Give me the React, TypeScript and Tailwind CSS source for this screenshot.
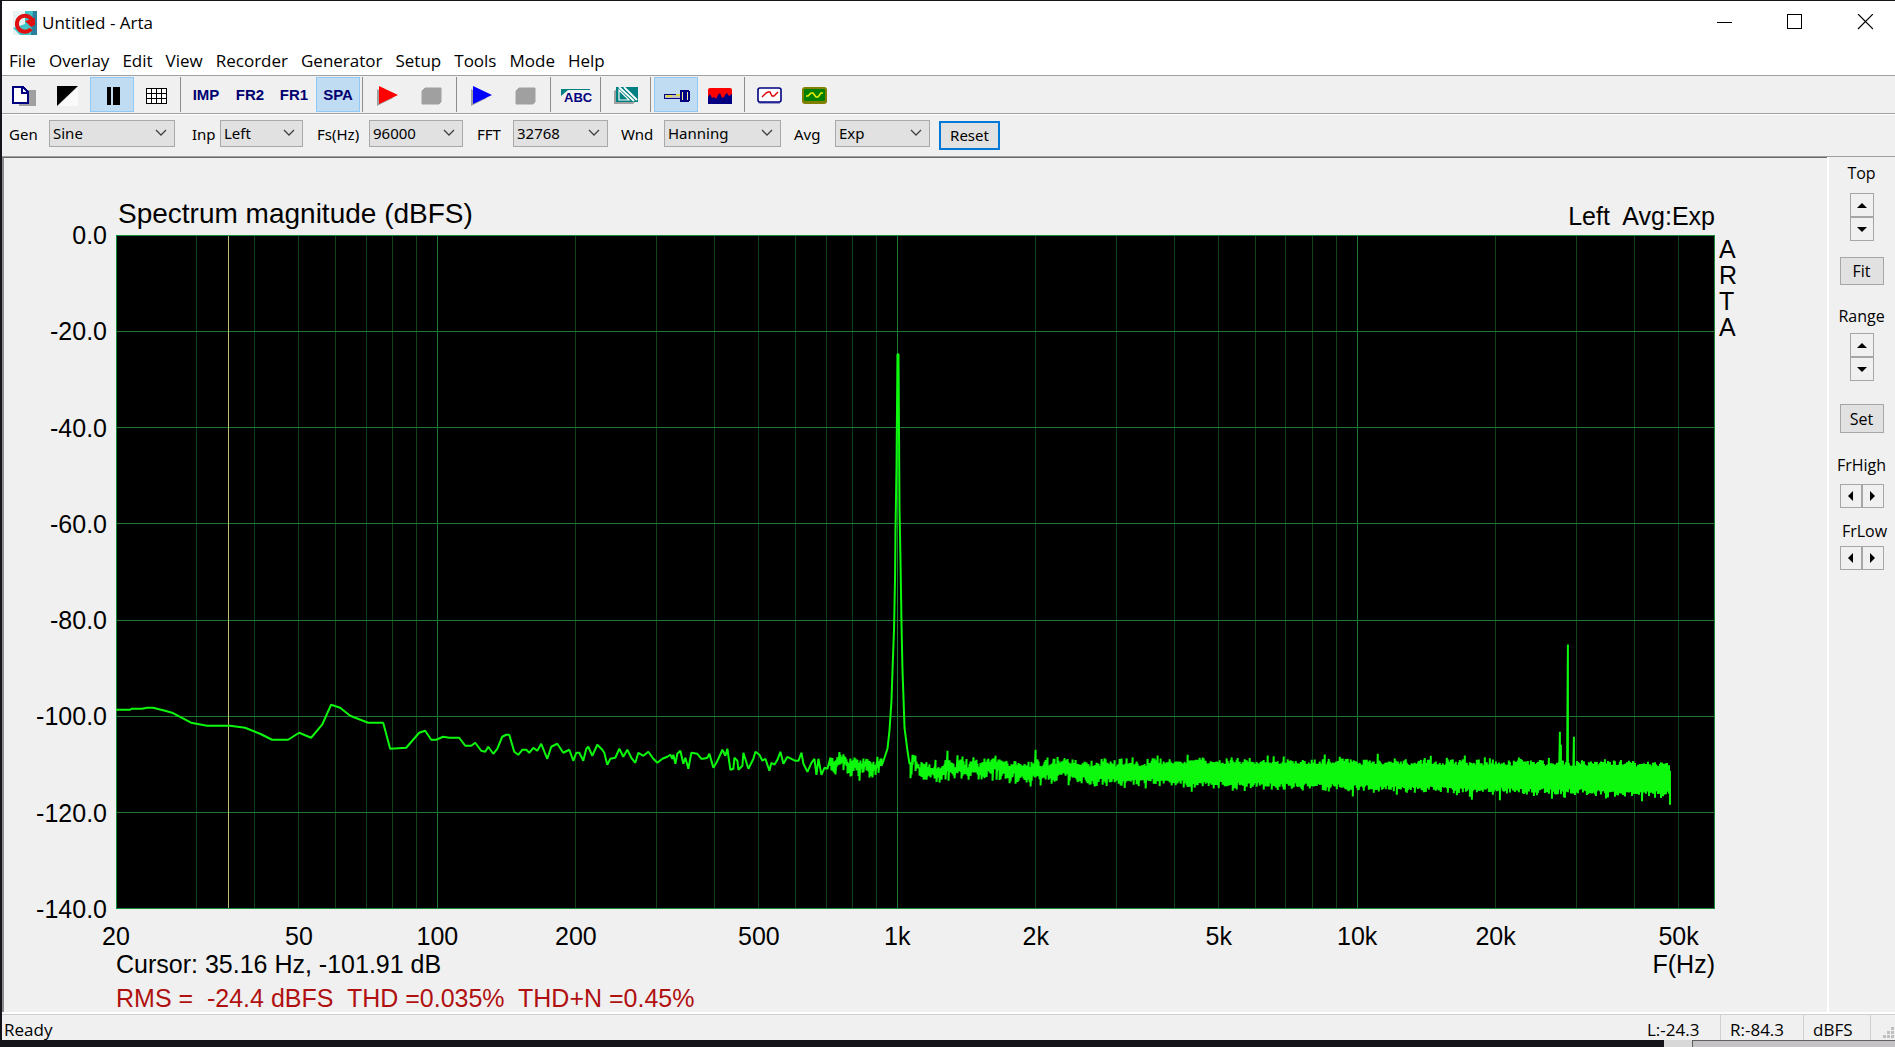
// App.tsx
import type { ReactNode } from "react";

const menuItems = ["File", "Overlay", "Edit", "View", "Recorder", "Generator", "Setup", "Tools", "Mode", "Help"];

/* ---------- Toolbar icons ---------- */

const NewIcon = () => (
  <svg width="24" height="20" shapeRendering="crispEdges">
    <path d="M7 4h17v16H7z" fill="#a0a0a0" />
    <path d="M1 1h10l5 5v11H1z" fill="#fff" stroke="#000080" strokeWidth="2" />
    <path d="M10 1v6h6" fill="none" stroke="#000080" strokeWidth="2" />
  </svg>
);

const InvertIcon = () => (
  <svg width="22" height="20">
    <path d="M21 1v19H2z" fill="#fafafa" />
    <path d="M0 0h21L0 20z" fill="#000" />
  </svg>
);

const PauseIcon = () => (
  <svg width="14" height="18" className="ml-1" shapeRendering="crispEdges">
    <path d="M0 0h4v18H0zM6 0h7v18H6z" fill="#000" />
  </svg>
);

const GridIcon = () => (
  <svg width="22" height="17" shapeRendering="crispEdges">
    <path d="M1 1h20v15H1z" fill="#fff" stroke="#000" strokeWidth="1" />
    <path d="M6 1v15M11 1v15M16 1v15M1 6h20M1 11h20" stroke="#000" strokeWidth="1" />
  </svg>
);

const PlayIcon = ({ color }: { color: string }) => (
  <svg width="24" height="20">
    <path d="M1 3v17l16-8z" fill="#a0a0a0" />
    <path d="M3 0v18l19-9z" fill={color} />
  </svg>
);

const StopIcon = () => (
  <svg width="22" height="18">
    <path d="M4 1h16v14l-2 2H1V4z" fill="#a0a0a0" stroke="#a0a0a0" strokeLinejoin="round" />
  </svg>
);

const AbcIcon = () => (
  <svg width="31" height="18">
    <path d="M0 2h29v1H7L0 9z" fill="#008080" />
    <text x="3" y="15" fontSize="13" fontWeight="bold" fill="#000080" fontFamily="Liberation Sans, sans-serif">ABC</text>
  </svg>
);

const StepIcon = () => (
  <svg width="25" height="18">
    <path d="M0 4l3-2v12h19l-3 3H0z" fill="#a0a0a0" />
    <path d="M2 0h22v15H2z" fill="#008080" />
    <path d="M5 3v10h10z" fill="#008080" stroke="#fff" strokeWidth="1.2" />
    <path d="M5 0l15 14M10 0l13 13" stroke="#fff" strokeWidth="1.8" />
  </svg>
);

const PlugIcon = () => (
  <svg width="27" height="12" shapeRendering="crispEdges">
    <path d="M1 4h16v4H1z" fill="#c0c0c0" stroke="#000080" />
    <path d="M3 6h6M13 5h4" stroke="#e0d840" strokeWidth="2" />
    <path d="M18 1h3v10h-3zM23 1h2l1 1v8l-1 1h-2z" fill="#f0f0a0" stroke="#000080" strokeWidth="1.5" />
    <path d="M21 0v12h2V0z" fill="#000080" />
  </svg>
);

const SpectrumIcon = () => (
  <svg width="24" height="16">
    <rect width="24" height="16" rx="2" fill="#ff0000" />
    <path d="M0 9l2-3 2 4 2-1 2 2 2-4 2-2 2 5 2-1 1-2 2-2 2 3 3-2v10H0z" fill="#000080" />
  </svg>
);

const ScopeIcon = () => (
  <svg width="26" height="18">
    <path d="M1 5v11l2 1h20v-3z" fill="#9a9acb" />
    <rect x="1" y="1" width="23" height="14" rx="2" fill="#fff" stroke="#000080" strokeWidth="1.6" />
    <path d="M5 10l4-4 2-1 2 0 2 4 2 0 4-4" fill="none" stroke="#e00000" strokeWidth="1.4" />
  </svg>
);

const MonitorIcon = () => (
  <svg width="25" height="17">
    <rect x="0" y="0" width="25" height="17" rx="3" fill="#808000" />
    <rect x="2" y="2" width="21" height="12" rx="1" fill="#008000" />
    <path d="M4 9l2 0 3-3 2 0 3 4 2 0 3-4 2 0" fill="none" stroke="#f0f000" strokeWidth="1.5" />
  </svg>
);

const AppIcon = () => (
  <svg width="24" height="24">
    <path d="M0 0h24v24H0z" fill="#e8f4f4" />
    <path d="M12 0h12v24H7L0 17l12-4z" fill="#40c4c8" />
    <path d="M20 0h4v24h-6z" fill="#2a7f9c" />
    <path d="M18 18a8 8 0 1 1 1-9" fill="none" stroke="#e01010" strokeWidth="4" />
    <path d="M12 10l10-3 0 7-4 2z" fill="#e01010" />
  </svg>
);

type Tool = { label: string; icon?: ReactNode; text?: string; active?: boolean };

const toolGroups: Tool[][] = [
  [
    { label: "New", icon: <NewIcon /> },
    { label: "Black and white", icon: <InvertIcon /> },
    { label: "Thick lines", icon: <PauseIcon />, active: true },
    { label: "Grid", icon: <GridIcon /> },
  ],
  [
    { label: "Impulse response", text: "IMP" },
    { label: "Two channel response", text: "FR2" },
    { label: "Single channel response", text: "FR1" },
    { label: "Spectrum analyzer", text: "SPA", active: true },
  ],
  [
    { label: "Record", icon: <PlayIcon color="#ff0000" /> },
    { label: "Stop recording", icon: <StopIcon /> },
  ],
  [
    { label: "Generate", icon: <PlayIcon color="#0000ff" /> },
    { label: "Stop generator", icon: <StopIcon /> },
  ],
  [{ label: "Title", icon: <AbcIcon /> }],
  [{ label: "Calibrate", icon: <StepIcon /> }],
  [
    { label: "Line input", icon: <PlugIcon />, active: true },
    { label: "Spectrogram", icon: <SpectrumIcon /> },
  ],
  [
    { label: "Signal time record", icon: <ScopeIcon /> },
    { label: "Level monitor", icon: <MonitorIcon /> },
  ],
];

const combos = [
  { id: "gen", label: "Gen", value: "Sine", labelClass: "w-10", selectClass: "w-[126px] mr-[17px]" },
  { id: "inp", label: "Inp", value: "Left", labelClass: "w-7", selectClass: "w-[83px] mr-[14px]" },
  { id: "fs", label: "Fs(Hz)", value: "96000", labelClass: "w-[52px]", selectClass: "w-[94px] mr-[14px]" },
  { id: "fft", label: "FFT", value: "32768", labelClass: "w-9", selectClass: "w-[95px] mr-[13px]" },
  { id: "wnd", label: "Wnd", value: "Hanning", labelClass: "w-[43px]", selectClass: "w-[117px] mr-[13px]" },
  { id: "avg", label: "Avg", value: "Exp", labelClass: "w-[41px]", selectClass: "w-[95px] mr-[9px]" },
];

/* ---------- Spectrum ---------- */

const PLOT_W = 1598;
const PLOT_H = 673;
const F_MIN = 20;
const F_MAX = 60000;

const ratio = (f: number) => Math.log10(f / F_MIN) / Math.log10(F_MAX / F_MIN);

const dbLabels = ["0.0", "-20.0", "-40.0", "-60.0", "-80.0", "-100.0", "-120.0", "-140.0"];

const freqLabels = [
  { f: 20, text: "20" },
  { f: 50, text: "50" },
  { f: 100, text: "100" },
  { f: 200, text: "200" },
  { f: 500, text: "500" },
  { f: 1000, text: "1k" },
  { f: 2000, text: "2k" },
  { f: 5000, text: "5k" },
  { f: 10000, text: "10k" },
  { f: 20000, text: "20k" },
  { f: 50000, text: "50k" },
];

const minorFreqs = [10, 100, 1000, 10000]
  .flatMap((d) => [2, 3, 4, 5, 6, 7, 8, 9].map((m) => m * d))
  .filter((f) => f > F_MIN && f < F_MAX);

const lowBand =
  "0,474 14,474 16,473 26,473 31,472 37,472 49,475 56,477 75,487 91,490 114,490 129,492 144,498 156,504 172,504 183,497 195,502 206,489 215,469 224,472 234,480 252,487 267,487 274,513 290,512 303,497 309,495 315,504 320,504 327,501 333,502 343,502 349,510 355,510 359,507 365,515 369,516 372,511 377,518 381,513 386,501 390,499 393,499 398,516 402,519 406,514 410,514 413,517 417,512 421,515 425,508 431,523 435,511 441,508 447,517 453,514 457,525 460,517 463,517 467,525 470,513 472,511 476,520 481,509 486,514 488,517 491,529 494,523 499,522 503,513 507,521 511,514 515,522 519,527 522,517 527,520 532,516 537,523 541,527 546,523 551,521 554,519 556,523 557,519 559,528 561,518 564,515 567,528 569,522 572,533 575,517 581,518 585,523 587,523 591,522 593,518 597,532 600,527 602,523 606,514 609,520 611,513 614,534 617,533 618,522 621,525 622,534 626,530 627,517 632,533 637,523 639,516 643,519 646,525 649,523 653,535 655,527 658,529 661,524 664,516 667,528 671,521 675,523 679,525 682,525 685,517 687,528 691,536 695,527 698,523 700,539 702,523 705,539 708,532 711,533";

const tone =
  "767,525 771,513 773,495 775,465 776,435 777.5,395 778.5,345 779,295 780,233 781,119 782,119 783,272 784,325 785,388 786,435 787,462 788,492 791,515 793,528";

// single bins that stick out of the noise floor: x -> y
const spurs: Record<number, number> = {
  743: 545, 831: 515, 919: 514, 1071: 519, 1261: 518, 1314: 520, 1355: 564, 1435: 563,
  1443: 496, 1444: 509, 1451: 409, 1457: 501,
};

let seed = 7;
const rand = () => {
  seed = (seed * 16807) % 2147483647;
  return seed / 2147483647;
};

// alternating low/high points, one pair for each column; the band fills up with frequency
const noise = (from: number, to: number) => {
  const pts: string[] = [];
  let drift = 0;
  for (let x = from; x <= to; x++) {
    const t = Math.min(1, Math.max(0, (x - 800) / 750));
    const loose = 1 - Math.min(1, Math.max(0, (x - 800) / 300));
    drift = drift * 0.7 + (rand() - 0.5) * 8 * loose;
    const center = (x < 800 ? 529 : 533 + 10 * t) + drift;
    const solid = (3 + 9 * Math.sqrt(t)) * (1 - loose * 0.6);
    const up = solid + 8 * rand() * rand() + (rand() > 0.85 ? 3 : 0);
    const down = solid + 10 * rand() * rand() + (rand() > 0.85 ? 3 : 0);
    const spur = spurs[x];
    const top = spur && spur < center ? spur : center - up;
    const bottom = spur && spur > center ? spur : center + down;
    pts.push(`${x},${top.toFixed(1)} ${x},${bottom.toFixed(1)}`);
  }
  return pts.join(" ");
};

const trace = [lowBand, noise(714, 765), tone, noise(794, 1552), "1553,535 1553,569"].join(" ");

const Plot = () => (
  <svg
    viewBox={`0 0 ${PLOT_W} ${PLOT_H}`}
    preserveAspectRatio="none"
    className="block min-h-0 w-full flex-1 bg-black"
    role="img"
    aria-label="Spectrum magnitude"
  >
    <g shapeRendering="crispEdges" strokeWidth="1">
      {minorFreqs.map((f) => (
        <line key={f} x1={ratio(f) * PLOT_W} x2={ratio(f) * PLOT_W} y1="0" y2={PLOT_H} stroke="#0d4219" />
      ))}
      {[100, 1000, 10000].map((f) => (
        <line key={f} x1={ratio(f) * PLOT_W} x2={ratio(f) * PLOT_W} y1="0" y2={PLOT_H} stroke="#1d7a33" />
      ))}
      {dbLabels.slice(1, -1).map((db, i) => (
        <line key={db} x1="0" x2={PLOT_W} y1={((i + 1) * PLOT_H) / 7} y2={((i + 1) * PLOT_H) / 7} stroke="#1d7a33" />
      ))}
      <line x1={ratio(35.16) * PLOT_W} x2={ratio(35.16) * PLOT_W} y1="0" y2={PLOT_H} stroke="#c0c078" />
      <rect x="0.5" y="0.5" width={PLOT_W - 1} height={PLOT_H - 1} fill="none" stroke="#148a38" />
    </g>
    <polyline points={trace} fill="none" stroke="#0cf80c" strokeWidth="2" strokeLinejoin="bevel" />
  </svg>
);

/* ---------- Controls ---------- */

const arrows = {
  up: "M0 5L5 0l5 5z",
  down: "M0 0h10L5 5z",
  left: "M5 0v10L0 5z",
  right: "M0 0v10l5-5z",
};

const ArrowButton = ({ dir, label, className }: { dir: keyof typeof arrows; label: string; className: string }) => {
  const vertical = dir === "up" || dir === "down";
  return (
    <button
      aria-label={label}
      className={`flex items-center justify-center border border-[#a6a6a6] bg-[#f0f0f0] ${className}`}
    >
      <svg width={vertical ? 10 : 5} height={vertical ? 5 : 10}>
        <path d={arrows[dir]} fill="#000" />
      </svg>
    </button>
  );
};

const Spinner = ({ name }: { name: string }) => (
  <div className="flex flex-col">
    <ArrowButton dir="up" label={`${name} up`} className="h-6 w-6" />
    <ArrowButton dir="down" label={`${name} down`} className="h-6 w-6" />
  </div>
);

const Stepper = ({ name }: { name: string }) => (
  <div className="flex">
    <ArrowButton dir="left" label={`${name} down`} className="h-6 w-[22px]" />
    <ArrowButton dir="right" label={`${name} up`} className="h-6 w-[22px]" />
  </div>
);

const Combo = ({ id, label, value, labelClass, selectClass }: (typeof combos)[number]) => (
  <>
    <label htmlFor={id} className={`shrink-0 pt-[2px] ${labelClass}`}>{label}</label>
    <div className={`grid shrink-0 items-center ${selectClass}`}>
      <select
        id={id}
        defaultValue={value}
        className="col-start-1 row-start-1 h-[27px] w-full appearance-none border border-[#a9a9a9] bg-[#e1e1e1] pl-[3px] leading-5"
      >
        <option>{value}</option>
      </select>
      <svg width="12" height="8" className="pointer-events-none col-start-1 row-start-1 mr-2 justify-self-end">
        <path d="M1 1l5 5 5-5" fill="none" stroke="#404040" strokeWidth="1.3" />
      </svg>
    </div>
  </>
);

const TitleBar = () => (
  <header className="flex h-10 shrink-0 items-center justify-between bg-white pl-[11px]">
    <div className="flex items-center gap-[5px] pt-1">
      <AppIcon />
      <h1 className="text-[17px] leading-6">Untitled - Arta</h1>
    </div>
    <div className="flex h-full gap-[10px] pt-[2px]">
      <button aria-label="Minimize" className="flex w-[60px] items-center justify-center">
        <svg width="16" height="16" shapeRendering="crispEdges"><path d="M0 8h15" stroke="#000" /></svg>
      </button>
      <button aria-label="Maximize" className="flex w-[60px] items-center justify-center">
        <svg width="16" height="16" shapeRendering="crispEdges"><path d="M.5.500h14v14h-14z" fill="none" stroke="#000" /></svg>
      </button>
      <button aria-label="Close" className="flex w-[60px] items-center justify-center">
        <svg width="16" height="16"><path d="M1 0l15 15M16 0L1 15" stroke="#000" strokeWidth="1.2" /></svg>
      </button>
    </div>
  </header>
);

const Toolbar = () => (
  <div className="flex h-[38px] shrink-0 border-b border-[#a0a0a0] pt-px pb-px" role="toolbar">
    {toolGroups.map((group, i) => (
      <div key={i} className="flex">
        {i > 0 && <div className="mx-[2px] w-[2px] border-l border-[#8c8c8c]" />}
        {group.map((tool) => (
          <button
            key={tool.label}
            aria-label={tool.text ? undefined : tool.label}
            title={tool.label}
            className={`flex w-11 items-center justify-center border pt-[2px] font-['Liberation_Sans',sans-serif] text-[15px] font-bold text-[#000070] ${
              tool.active ? "border-[#90c8f6] bg-[#c0dcf3]" : "border-transparent"
            }`}
          >
            {tool.icon ?? tool.text}
          </button>
        ))}
      </div>
    ))}
  </div>
);

const ChartPanel = () => (
  <main className="flex min-w-0 flex-1 flex-col border-t border-l-2 border-[#696969] border-l-[#8c8c8c] font-['Liberation_Sans',sans-serif] text-[25px] leading-[26px]">
    <div className="flex min-h-0 flex-1">
      <div className="flex w-28 shrink-0 flex-col justify-between pt-[77px] pr-[9px] text-right">
        {dbLabels.map((db) => (
          <div key={db} className="flex h-0 items-center justify-end">{db}</div>
        ))}
      </div>
      <div className="flex min-w-0 flex-1 flex-col">
        <div className="flex h-[77px] shrink-0 items-end justify-between pb-[6px]">
          <h2 className="pb-[2px] pl-[2px] text-[28px] leading-[26px]">Spectrum magnitude (dBFS)</h2>
          <div className="whitespace-pre">Left  Avg:Exp</div>
        </div>
        <Plot />
      </div>
      <div className="flex w-28 shrink-0 flex-col pt-[78px] pl-1">
        {["A", "R", "T", "A"].map((c, i) => (
          <span key={i}>{c}</span>
        ))}
      </div>
    </div>

    <div className="mr-28 ml-28 h-[103px] shrink-0">
      <div className="relative h-[42px]">
        {freqLabels.map(({ f, text }) => (
          <span key={f} className="absolute top-[14px] -translate-x-1/2" style={{ left: `${ratio(f) * 100}%` }}>
            {text}
          </span>
        ))}
      </div>
      <div className="flex justify-between">
        <span>Cursor: 35.16 Hz, -101.91 dB</span>
        <span>F(Hz)</span>
      </div>
      <div className="pt-2 whitespace-pre text-[#b01010]">RMS =  -24.4 dBFS  THD =0.035%  THD+N =0.45%</div>
    </div>
  </main>
);

const SidePanel = () => (
  <aside className="flex w-[68px] shrink-0 flex-col items-center border-l-2 border-white pr-px text-[16px] leading-5">
    <span className="pt-[6px]">Top</span>
    <div className="pt-[10px]"><Spinner name="Top" /></div>
    <button className="mt-4 h-7 w-11 border border-[#a6a6a6] bg-[#e1e1e1]">Fit</button>
    <span className="pt-[21px]">Range</span>
    <div className="pt-[7px]"><Spinner name="Range" /></div>
    <button className="mt-[23px] h-[29px] w-11 border border-[#a6a6a6] bg-[#e1e1e1]">Set</button>
    <span className="pt-[22px]">FrHigh</span>
    <div className="pt-[9px]"><Stepper name="FrHigh" /></div>
    <span className="pt-[13px] pl-[6px]">FrLow</span>
    <div className="pt-[5px]"><Stepper name="FrLow" /></div>
  </aside>
);

const StatusBar = () => (
  <footer className="flex h-[26px] shrink-0 items-stretch border-t border-[#d0d0d0] pl-[2px] text-[17px] leading-[30px]">
    <span className="flex-1">Ready</span>
    <span className="w-[74px] border-r border-[#d0d0d0]">L:-24.3</span>
    <span className="w-[83px] border-r border-[#d0d0d0] pl-[9px]">R:-84.3</span>
    <span className="w-[67px] border-r border-[#d0d0d0] pl-[9px]">dBFS</span>
    <div className="flex w-6 items-end justify-end pr-px pb-[2px]">
      <svg width="11" height="11" shapeRendering="crispEdges">
        <path d="M8 0h3v3H8zM4 4h3v3H4zM8 4h3v3H8zM0 8h3v3H0zM4 8h3v3H4zM8 8h3v3H8z" fill="#bfbfbf" />
      </svg>
    </div>
  </footer>
);

const App = () => {
  return (
    <div className="flex h-screen min-h-[640px] flex-col bg-[#16141b] pt-px pl-[2px] font-['Open_Sans',sans-serif] text-black">
      <div className="flex min-h-0 flex-1 flex-col bg-[#f0f0f0]">
        <TitleBar />
        <nav className="flex h-[34px] shrink-0 items-center gap-[13px] bg-white pl-[7px] text-[17px]">
          {menuItems.map((item) => (
            <button key={item} className="pt-[6px] leading-6">{item}</button>
          ))}
        </nav>
        <div className="h-px shrink-0 bg-[#a0a0a0]" />
        <Toolbar />

        <form
          className="flex h-[42px] shrink-0 items-center border-t border-white pb-[5px] pl-[7px] font-['Noto_Sans',sans-serif] text-[15px] leading-5"
          onSubmit={(e) => e.preventDefault()}
        >
          {combos.map((combo) => (
            <Combo key={combo.id} {...combo} />
          ))}
          <button type="button" className="mt-1 h-[29px] w-[61px] border-2 border-[#0078d7] bg-[#e1e1e1]">
            Reset
          </button>
        </form>
        <div className="h-px shrink-0 bg-[#a0a0a0]" />

        <div className="flex min-h-0 flex-1 border-b-2 border-white">
          <ChartPanel />
          <SidePanel />
        </div>
        <StatusBar />
      </div>
      {/* desktop strip under the window */}
      <div className="flex h-[7px] shrink-0">
        <div className="flex-1" />
        <div className="w-7 bg-[#d8d8d8]" />
        <div className="w-[203px] border-t border-l border-[#606060] bg-[#c4c2c4]" />
      </div>
    </div>
  );
};

export default App;
